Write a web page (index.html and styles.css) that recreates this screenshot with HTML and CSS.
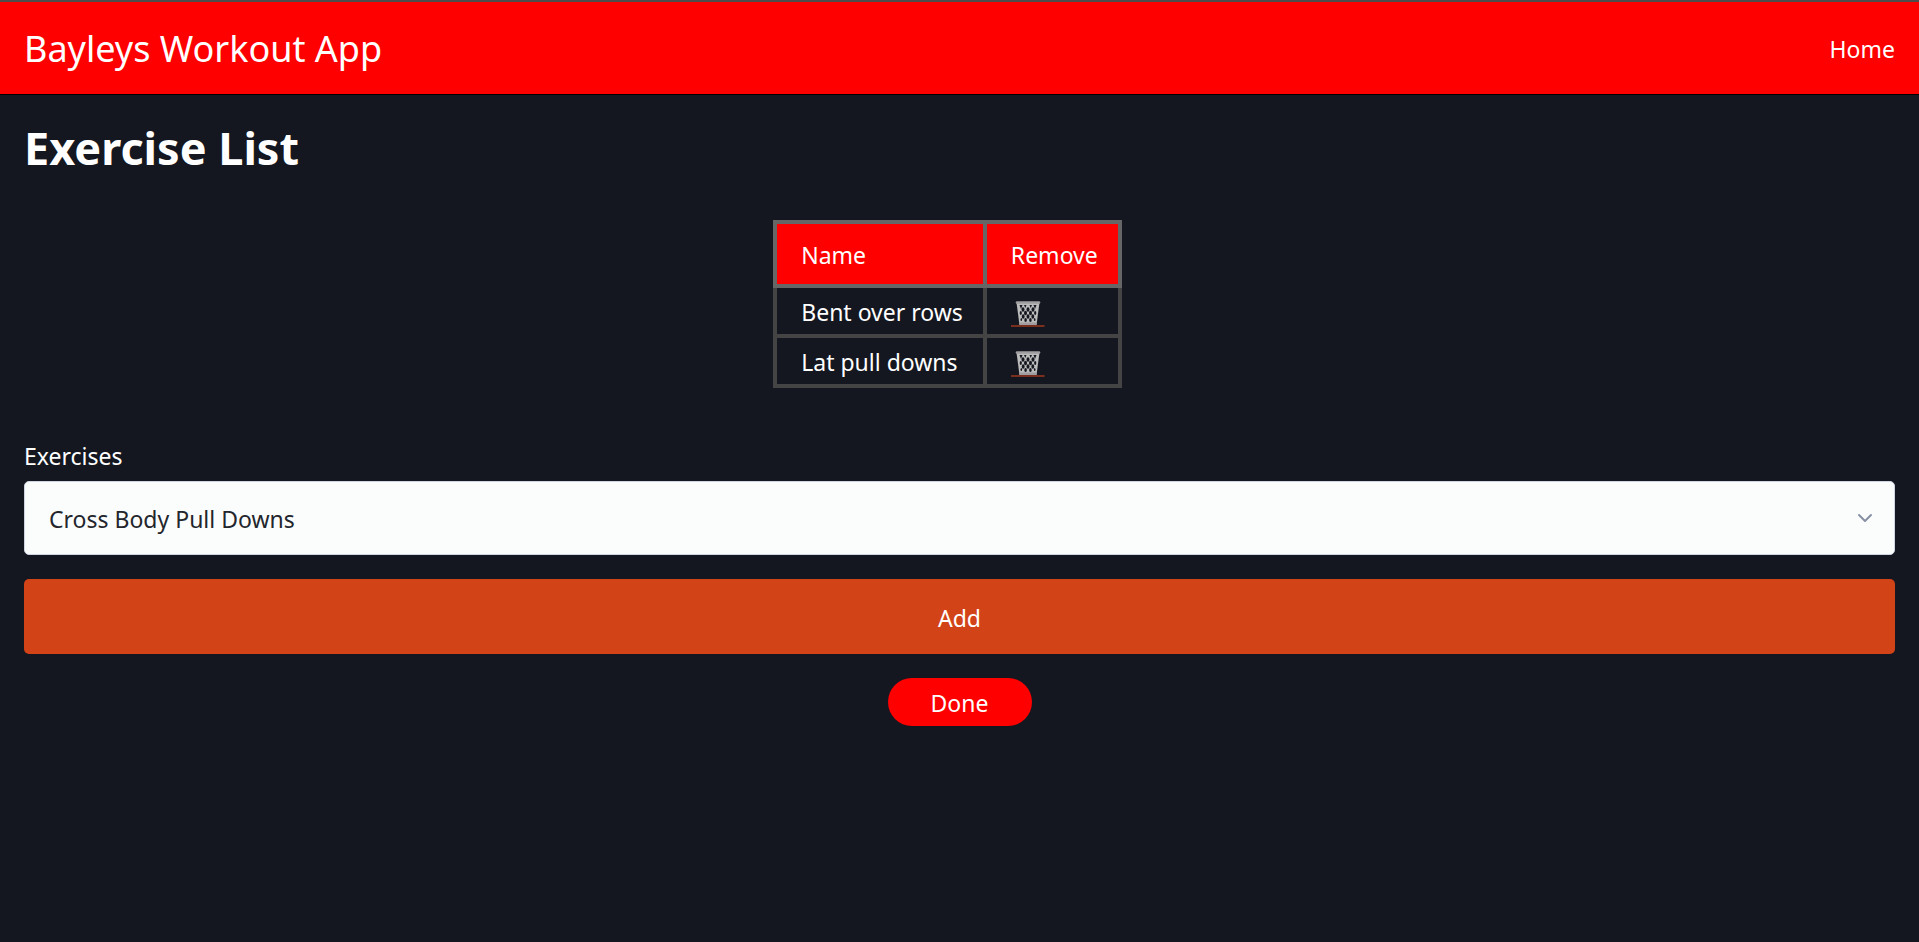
FILE: index.html
```html
<!DOCTYPE html>
<html lang="en">
<head>
<meta charset="utf-8">
<title>Bayleys Workout App</title>
<link rel="stylesheet" href="styles.css">
</head>
<body>
<svg class="sprite" aria-hidden="true">
  <symbol id="trash" viewBox="0 0 34 26">
    <path d="M0 25h33.500" stroke="#7a2f1e" stroke-width="2"/>
    <path d="M5.500 1.500h23L25.500 24H8.500z" fill="#bcbcbc"/>
    <g fill="#14171f">
      <path d="M8.500 4h3l-1.500 4zM13 4h2.500l-1.200 3zM18.500 4H21l-1.300 3zM22.500 4h3L24 8z"/>
      <ellipse cx="12" cy="8.500" rx="1.500" ry="2.300"/><ellipse cx="17" cy="8.500" rx="1.500" ry="2.300"/><ellipse cx="22" cy="8.500" rx="1.500" ry="2.300"/>
      <ellipse cx="9.800" cy="12" rx="1.100" ry="2"/><ellipse cx="14.500" cy="12" rx="1.500" ry="2.300"/><ellipse cx="19.500" cy="12" rx="1.500" ry="2.300"/><ellipse cx="24.200" cy="12" rx="1.100" ry="2"/>
      <ellipse cx="12.200" cy="15.500" rx="1.400" ry="2.200"/><ellipse cx="17" cy="15.500" rx="1.500" ry="2.200"/><ellipse cx="21.800" cy="15.500" rx="1.400" ry="2.200"/>
      <ellipse cx="10.300" cy="18.500" rx=".8" ry="1.600"/><ellipse cx="14.600" cy="19" rx="1.300" ry="1.900"/><ellipse cx="19.400" cy="19" rx="1.300" ry="1.900"/><ellipse cx="23.700" cy="18.500" rx=".8" ry="1.600"/>
    </g>
    <path d="M6 1.500h22" stroke="#a09ea0" stroke-width="2.600" stroke-linecap="round"/>
    <path d="M9.500 22.700h15" stroke="#a09ea0" stroke-width="2.600" stroke-linecap="round"/>
  </symbol>
</svg>
<header class="navbar">
  <span class="brand">Bayleys Workout App</span>
  <nav><a class="nav-link" href="#">Home</a></nav>
</header>
<main class="page">
  <h1 class="page-title">Exercise List</h1>
  <div class="table-area">
    <table class="exercises">
      <thead>
        <tr><th scope="col">Name</th><th scope="col">Remove</th></tr>
      </thead>
      <tbody>
        <tr><td>Bent over rows</td><td><button class="remove-button" type="button" aria-label="Remove Bent over rows"><svg class="icon"><use href="#trash"/></svg></button></td></tr>
        <tr><td>Lat pull downs</td><td><button class="remove-button" type="button" aria-label="Remove Lat pull downs"><svg class="icon"><use href="#trash"/></svg></button></td></tr>
      </tbody>
    </table>
  </div>
  <form class="add-form">
    <label class="label" for="exercise">Exercises</label>
    <div class="select-wrap">
      <select class="select" id="exercise"><option>Cross Body Pull Downs</option></select>
      <svg class="chevron" viewBox="0 0 24 24" aria-hidden="true"><path d="M6 9l6 6 6-6"/></svg>
    </div>
    <button class="add-button" type="button">Add</button>
  </form>
  <div class="actions"><button class="done-button" type="button">Done</button></div>
</main>
</body>
</html>
```
FILE: styles.css
```css
* { box-sizing: border-box; }
body {
  margin: 0;
  background: #14171f;
  color: #fff;
  font: 23px/36px "Segoe UI", "Noto Sans", sans-serif;
}
.sprite { position: absolute; width: 0; height: 0; }
.navbar {
  display: flex;
  align-items: center;
  justify-content: space-between;
  padding: 17px 24px 15px;
  background: #f00;
  border-top: 2px solid #4d4d4d;
  border-bottom: 1px solid #000;
}
.brand { font-size: 36px; line-height: 60px; }
.nav-link { color: #fff; text-decoration: none; }
.page { padding: 23px 24px; }
.page-title { margin: 0; font-size: 45px; line-height: 60px; font-weight: 700; }
.table-area { display: flex; justify-content: center; padding: 42px 24px 50px 0; }
.exercises { border-collapse: collapse; white-space: nowrap; }
.exercises th, .exercises td { text-align: left; border: 4px solid #444; }
.exercises th { padding: 13px 20px 11px 24px; font-weight: 400; background: #f00; border-color: #666; }
.exercises td { padding: 6px 20px 4px 24px; }
.remove-button { display: flex; align-items: flex-start; height: 36px; padding: 7px 0 0; border: 0; background: none; }
.icon { width: 34px; height: 26px; }
.add-form { display: flex; flex-direction: column; }
.label { margin-bottom: 7px; }
.select-wrap { display: grid; align-items: center; margin-bottom: 24px; }
.select, .chevron { grid-area: 1 / 1; }
.select {
  appearance: none;
  width: 100%;
  height: 74px;
  padding: 2px 24px 0;
  border: 1px solid #cfd5e2;
  border-radius: 5px;
  background: #fbfdfc;
  color: #23262c;
  font: inherit;
}
.chevron {
  justify-self: end;
  width: 24px;
  height: 24px;
  margin-right: 18px;
  fill: none;
  stroke: #8891a4;
  stroke-width: 2;
  stroke-linecap: round;
  stroke-linejoin: round;
  pointer-events: none;
}
.add-button {
  height: 75px;
  padding: 2px 24px 0;
  border: 0;
  border-radius: 5px;
  background: #d24317;
  color: #fff;
  font: inherit;
}
.actions { display: flex; justify-content: center; padding-top: 24px; }
.done-button {
  height: 48px;
  width: 144px;
  padding: 2px 0 0;
  border: 0;
  border-radius: 24px;
  background: #f00;
  color: #fff;
  font: inherit;
}
```
